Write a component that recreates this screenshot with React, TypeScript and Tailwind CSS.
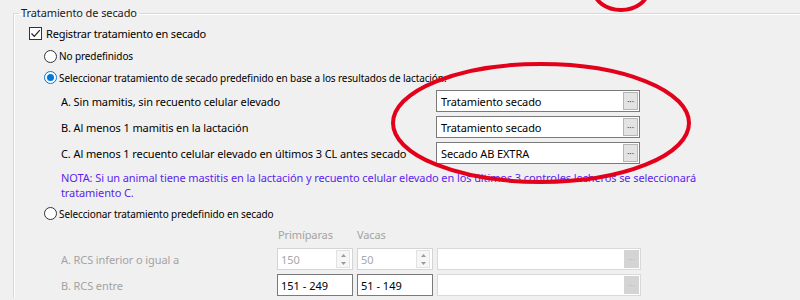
import React from "react";

const font = { fontFamily: '"Noto Sans", "Segoe UI", sans-serif' };

function Radio({ checked }: { checked?: boolean }) {
  return (
    <span
      className={
        "flex items-center justify-center w-[13px] h-[13px] rounded-full border bg-white shrink-0 " +
        (checked ? "border-[#0078d7]" : "border-[#333333]")
      }
    >
      {checked && <span className="w-[7px] h-[7px] rounded-full bg-[#0078d7]" />}
    </span>
  );
}

function Combo({ value, disabled }: { value?: string; disabled?: boolean }) {
  return (
    <div
      className={
        "flex items-center w-[204px] h-[22px] bg-white border shrink-0 " +
        (disabled ? "border-[#d9d9d9]" : "border-[#7a7a7a]")
      }
    >
      <span className="flex-1 pl-[4px] text-[11px] tracking-[-0.1px] text-black leading-none whitespace-nowrap">
        {value}
      </span>
      <span
        className={
          "flex items-center justify-center w-[15px] h-[18px] mr-[1px] text-[9px] leading-none " +
          (disabled
            ? "bg-[#d4d4d4] text-[#bdbdbd]"
            : "bg-[#e3e3e3] border border-[#b5b5b5] text-[#444444]")
        }
      >
        ···
      </span>
    </div>
  );
}

function Spin({ value }: { value: string }) {
  return (
    <div className="flex items-center w-[76px] h-[22px] bg-white border border-[#d4d4d4] shrink-0">
      <span className="flex-1 pl-[3px] text-[11px] text-[#a8a8a8] leading-none">{value}</span>
      <span className="flex flex-col w-[14px] h-[18px] mr-[2px] border border-[#e2e2e2] bg-[#f6f6f6]">
        <span className="flex-1 flex items-center justify-center">
          <svg width="5" height="3" viewBox="0 0 5 3">
            <path d="M0 3 L2.5 0 L5 3 Z" fill="#9a9a9a" />
          </svg>
        </span>
        <span className="flex-1 flex items-center justify-center">
          <svg width="5" height="3" viewBox="0 0 5 3">
            <path d="M0 0 L2.5 3 L5 0 Z" fill="#9a9a9a" />
          </svg>
        </span>
      </span>
    </div>
  );
}

function TextBox({ value }: { value: string }) {
  return (
    <div className="flex items-center w-[76px] h-[22px] bg-white border border-[#7a7a7a] shrink-0">
      <span className="pl-[3px] text-[11px] text-black leading-none">{value}</span>
    </div>
  );
}

export default function App() {
  return (
    <div className="relative w-[800px] h-[300px] overflow-hidden bg-[#f0f0f0] text-black" style={font}>
      <fieldset className="mt-[5px] ml-[13px] border-t border-l border-[#d9d9d9] shadow-[inset_1px_1px_0_#ffffff]">
        <legend className="ml-[5px] px-[2px] text-[11px] tracking-[-0.1px] leading-[16px] text-[#1a1a1a]">
          Tratamiento de secado
        </legend>

        <div className="flex items-center h-[24px] pl-[15px] gap-[4px]">
          <span className="flex items-center justify-center w-[13px] h-[13px] bg-white border border-[#333333]">
            <svg width="11" height="11" viewBox="0 0 11 11">
              <path d="M1.5 5.5 L4.3 8.3 L9.8 2.2" fill="none" stroke="#222222" strokeWidth="1.2" />
            </svg>
          </span>
          <span className="text-[11px] tracking-[-0.2px] leading-none">Registrar tratamiento en secado</span>
        </div>

        <div className="flex items-center h-[22px] pl-[30px] gap-[2px]">
          <Radio />
          <span className="text-[10px] tracking-[-0.1px] leading-none">No predefinidos</span>
        </div>

        <div className="flex items-center h-[21px] pl-[30px] gap-[2px]">
          <Radio checked />
          <span className="text-[10px] tracking-[-0.1px] leading-none whitespace-nowrap">
            Seleccionar tratamiento de secado predefinido en base a los resultados de lactación:
          </span>
        </div>

        {[
          ["A. Sin mamitis, sin recuento celular elevado", "Tratamiento secado"],
          ["B. Al menos 1 mamitis en la lactación", "Tratamiento secado"],
          ["C. Al menos 1 recuento celular elevado en últimos 3 CL antes secado", "Secado AB EXTRA"],
        ].map(([label, value]) => (
          <div key={label} className="flex items-center h-[26px] pl-[47px]">
            <span className="w-[375px] shrink-0 text-[11px] tracking-[-0.1px] leading-none whitespace-nowrap">
              {label}
            </span>
            <Combo value={value} />
          </div>
        ))}

        <div className="mt-[4px] pl-[47px] pr-[95px] text-[11px] tracking-[-0.1px] leading-[15px] text-[#5b1ff0]">
          NOTA: Si un animal tiene mastitis en la lactación y recuento celular elevado en los últimos 3 controles
          lecheros se seleccionará tratamiento C.
        </div>

        <div className="flex items-center h-[27px] pl-[30px] gap-[2px]">
          <Radio />
          <span className="text-[10px] tracking-[-0.1px] leading-none">Seleccionar tratamiento predefinido en secado</span>
        </div>

        <div className="flex items-center h-[15px] pl-[264px] text-[11px] tracking-[-0.1px] leading-none text-[#a3a3a3]">
          <span className="w-[79px]">Primíparas</span>
          <span>Vacas</span>
        </div>

        <div className="flex items-center h-[26px] mt-[4px] pl-[47px] gap-[4px]">
          <span className="w-[212px] shrink-0 text-[11px] tracking-[-0.1px] leading-none text-[#a3a3a3]">
            A. RCS inferior o igual a
          </span>
          <Spin value="150" />
          <Spin value="50" />
          <Combo disabled />
        </div>

        <div className="flex items-center h-[26px] pl-[47px] gap-[4px]">
          <span className="w-[212px] shrink-0 text-[11px] tracking-[-0.1px] leading-none text-[#a3a3a3]">
            B. RCS entre
          </span>
          <TextBox value="151 - 249" />
          <TextBox value="51 - 149" />
          <Combo disabled />
        </div>
      </fieldset>

      <svg className="absolute inset-0 pointer-events-none" width="800" height="300" viewBox="0 0 800 300">
        <ellipse cx="541" cy="123" rx="148" ry="59" fill="none" stroke="#e3001b" strokeWidth="4" />
        <ellipse cx="621" cy="-10" rx="27" ry="20" fill="none" stroke="#e3001b" strokeWidth="4" />
      </svg>
    </div>
  );
}
